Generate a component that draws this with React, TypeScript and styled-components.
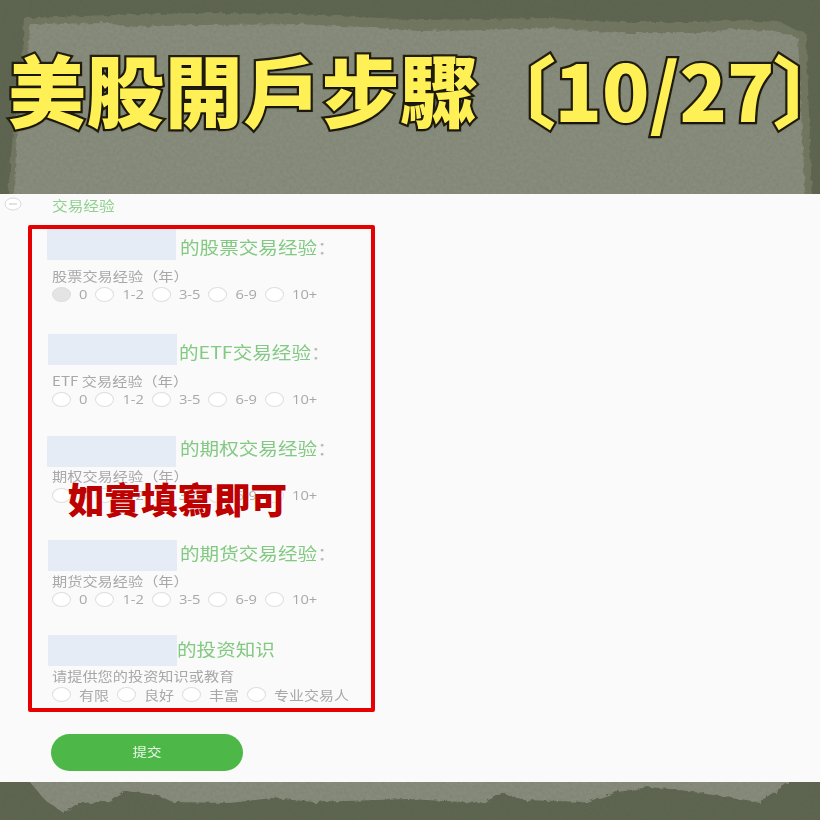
import React from 'react';
import styled, { createGlobalStyle, css } from 'styled-components';

const Global = createGlobalStyle`
  html, body { margin: 0; padding: 0; background: #5c634e; }
  body { font-family: "Noto Sans CJK SC", "Noto Sans", sans-serif; }
`;

/* the source picture is squashed a bit in height and soft */
const squashed = css`
  display: inline-block;
  transform: scaleY(0.86);
  transform-origin: left center;
  filter: blur(0.35px);
`;

/* ------------ page ------------- */
const Page = styled.div`
  width: 820px;
  height: 820px;
  display: flex;
  flex-direction: column;
  overflow: hidden;
`;

const Banner = styled.header`
  position: relative;
  height: 194px;
  flex: none;
  overflow: hidden;
`;

const BannerArt = styled.svg`
  position: absolute;
  inset: 0;
  width: 100%;
  height: 100%;
`;

const Title = styled.h1`
  position: relative;
  margin: 0;
  padding: 38px 0 0 8px;
  display: flex;
  align-items: center;
  height: 100px;
  white-space: nowrap;
  font-family: "Noto Sans CJK TC", sans-serif;
  font-weight: 900;
  font-size: 78px;
  line-height: 100px;
  letter-spacing: 0.4px;
  color: #fff055;
  -webkit-text-stroke: 4.5px #221f0e;
  paint-order: stroke fill;
  text-shadow: 0 1px 3px rgba(0, 0, 0, 0.5);
`;

const TitleCount = styled.span`
  margin-left: 37px;
  letter-spacing: 0;
  font-feature-settings: "palt";
`;

const Footer = styled.footer`
  position: relative;
  flex: 1;
  overflow: hidden;
`;

/* ------------ form ------------- */
const Panel = styled.main`
  flex: none;
  height: 588px;
  box-sizing: border-box;
  background: #fafafa;
  display: flex;
  flex-direction: column;
`;

const GroupRow = styled.div`
  height: 31px;
  flex: none;
  display: flex;
  align-items: flex-start;
  padding: 3px 0 0 4px;
  box-sizing: border-box;
`;

const GroupToggle = styled.svg`
  width: 18px;
  height: 14px;
  flex: none;
`;

const GroupName = styled.span`
  ${squashed}
  margin-left: 30px;
  font-size: 15.7px;
  line-height: 18px;
  color: #8fd08f;
`;

const RedBox = styled.div`
  position: relative;
  width: 347px;
  height: 487px;
  margin-left: 28px;
  box-sizing: border-box;
  border: 4px solid #e60000;
  border-radius: 2px;
  flex: none;
`;

const Section = styled.section<{ $height: number }>`
  height: ${p => p.$height}px;
`;

const TitleRow = styled.div<{ $indent: number }>`
  display: flex;
  align-items: flex-start;
  height: 31px;
  padding-left: ${p => p.$indent}px;
`;

const Blank = styled.div`
  width: 129px;
  height: 31px;
  flex: none;
  background: #e6ecf5;
`;

const Heading = styled.h3<{ $gap: number; $top: number }>`
  ${squashed}
  margin: ${p => p.$top}px 0 0 ${p => p.$gap}px;
  font-size: 19.6px;
  line-height: 20px;
  font-weight: 400;
  color: #82c982;
  white-space: nowrap;
`;

const Colon = styled.span`
  color: #bcbcbc;
`;

const FieldLabel = styled.div<{ $top: number }>`
  ${squashed}
  display: block;
  margin: ${p => p.$top}px 0 0 20px;
  font-size: 15.2px;
  line-height: 16px;
  color: #a8a8a8;
  white-space: nowrap;
`;

const Options = styled.div<{ $top: number }>`
  display: flex;
  align-items: center;
  height: 15px;
  margin: ${p => p.$top}px 0 0 20px;
`;

const Radio = styled.span<{ $checked?: boolean }>`
  width: 19px;
  height: 15px;
  flex: none;
  box-sizing: border-box;
  border-radius: 50%;
  border: 1px solid #dedede;
  background: ${p => (p.$checked ? '#e4e4e4' : '#fff')};
`;

const OptionText = styled.span<{ $wide?: boolean }>`
  ${squashed}
  margin: 0 8px;
  font-family: ${p => (p.$wide ? 'inherit' : '"Open Sans", sans-serif')};
  font-size: ${p => (p.$wide ? 15 : 14.7)}px;
  line-height: 15px;
  color: #a8a8a8;
  white-space: nowrap;
`;

const Stamp = styled.div`
  position: absolute;
  left: 36px;
  top: 248px;
  font-family: "Noto Sans CJK TC", sans-serif;
  font-size: 36.5px;
  line-height: 44px;
  font-weight: 900;
  color: #bd0000;
  white-space: nowrap;
  text-shadow: 0 0 2px #fff;
`;

const SubmitBar = styled.div`
  padding: 22px 0 0 51px;
`;

const Submit = styled.button`
  width: 192px;
  height: 37px;
  border: none;
  border-radius: 19px;
  background: #4db748;
  color: #eaf7e8;
  font-family: inherit;
  cursor: pointer;
`;

const SubmitText = styled.span`
  ${squashed}
  font-size: 14.5px;
  line-height: 16px;
`;

/* ------------ data ------------- */
const YEARS = ['0', '1-2', '3-5', '6-9', '10+'];
const LEVELS = ['有限', '良好', '丰富', '专业交易人'];

type Row = {
  heading: string;
  colon: boolean;
  label: string;
  options: string[];
  height: number;
  indent: number;
  gap: number;
  headingTop: number;
  labelTop: number;
  optionsTop: number;
  wide?: boolean;
  checked?: boolean;
};

const ROWS: Row[] = [
  { heading: '的股票交易经验', colon: true, label: '股票交易经验（年）', options: YEARS, height: 105, indent: 15, gap: 4, headingTop: 8, labelTop: 7, optionsTop: 4, checked: true },
  { heading: '的ETF交易经验', colon: true, label: 'ETF 交易经验（年）', options: YEARS, height: 102, indent: 16, gap: 2, headingTop: 8, labelTop: 7, optionsTop: 4 },
  { heading: '的期权交易经验', colon: true, label: '期权交易经验（年）', options: YEARS, height: 104, indent: 15, gap: 4, headingTop: 2, labelTop: 0, optionsTop: 5 },
  { heading: '的期货交易经验', colon: true, label: '期货交易经验（年）', options: YEARS, height: 95, indent: 16, gap: 3, headingTop: 3, labelTop: 1, optionsTop: 4 },
  { heading: '的投资知识', colon: false, label: '请提供您的投资知识或教育', options: LEVELS, height: 73, indent: 16, gap: 0, headingTop: 4, labelTop: 1, optionsTop: 4, wide: true },
];

const PaperFilters: React.FC = () => (
  <defs>
    <filter id="grain" x="0" y="0" width="100%" height="100%">
      <feTurbulence type="fractalNoise" baseFrequency="0.3" numOctaves="3" seed="7" />
      <feColorMatrix values="0 0 0 0 0.14  0 0 0 0 0.15  0 0 0 0 0.1  0.4 0 0 0 -0.12" />
    </filter>
    <filter id="rough" x="-5%" y="-20%" width="110%" height="140%">
      <feTurbulence type="fractalNoise" baseFrequency="0.16" numOctaves="3" seed="3" result="n" />
      <feDisplacementMap in="SourceGraphic" in2="n" scale="5" />
    </filter>
  </defs>
);

const App: React.FC = () => (
  <Page>
    <Global />
    <Banner>
      <BannerArt viewBox="0 0 820 194" aria-hidden="true">
        <PaperFilters />
        <rect width="820" height="194" fill="#5c634e" />
        <path
          d="M24 18 L110 15 L200 13 L300 14 L420 20 L550 18 L620 22 L700 22 L735 20 L780 22 L806 34 L812 194 L8 194 L14 120 L22 60 Z"
          fill="#70765f"
          filter="url(#rough)"
        />
        <path
          d="M30 24 L110 23 L126 27 L200 25 L300 24 L360 27 L420 31 L480 30 L550 28 L620 33 L700 33 L730 29 L775 31 L798 38 L801 110 L806 210 L13 210 L17 130 L27 70 Z"
          fill="#888c7c"
          filter="url(#rough)"
        />
        <rect width="820" height="194" filter="url(#grain)" />
      </BannerArt>
      <Title>
        美股開戶步驟<TitleCount>〔10/27〕</TitleCount>
      </Title>
    </Banner>

    <Panel>
      <GroupRow>
        <GroupToggle viewBox="0 0 18 14" aria-hidden="true">
          <ellipse cx="9" cy="7" rx="8" ry="6" fill="#fff" stroke="#dadada" />
          <path d="M5 7h8" stroke="#c4c4c4" strokeWidth="1" />
        </GroupToggle>
        <GroupName>交易经验</GroupName>
      </GroupRow>

      <RedBox>
        {ROWS.map(row => (
          <Section key={row.heading} $height={row.height}>
            <TitleRow $indent={row.indent}>
              <Blank />
              <Heading $gap={row.gap} $top={row.headingTop}>
                {row.heading}
                {row.colon && <Colon>：</Colon>}
              </Heading>
            </TitleRow>
            <FieldLabel $top={row.labelTop}>{row.label}</FieldLabel>
            <Options $top={row.optionsTop}>
              {row.options.map((option, idx) => (
                <React.Fragment key={option}>
                  <Radio $checked={row.checked && idx === 0} />
                  <OptionText $wide={row.wide}>{option}</OptionText>
                </React.Fragment>
              ))}
            </Options>
          </Section>
        ))}
        <Stamp>如實填寫即可</Stamp>
      </RedBox>

      <SubmitBar>
        <Submit>
          <SubmitText>提交</SubmitText>
        </Submit>
      </SubmitBar>
    </Panel>

    <Footer>
      <BannerArt viewBox="0 0 820 38" aria-hidden="true">
        <PaperFilters />
        <rect width="820" height="38" fill="#5c634e" />
        <path
          d="M25 -6 L45 18 L64 31 L78 21 L110 20 L126 9 L157 13 L173 20 L230 21 L272 16 L314 20 L408 17 L482 21 L503 11 L524 18 L586 20 L618 10 L649 5 L680 8 L759 20 L785 3 L796 -6 Z"
          fill="#878b7b"
          filter="url(#rough)"
        />
        <rect width="820" height="38" filter="url(#grain)" />
      </BannerArt>
    </Footer>
  </Page>
);

export default App;
